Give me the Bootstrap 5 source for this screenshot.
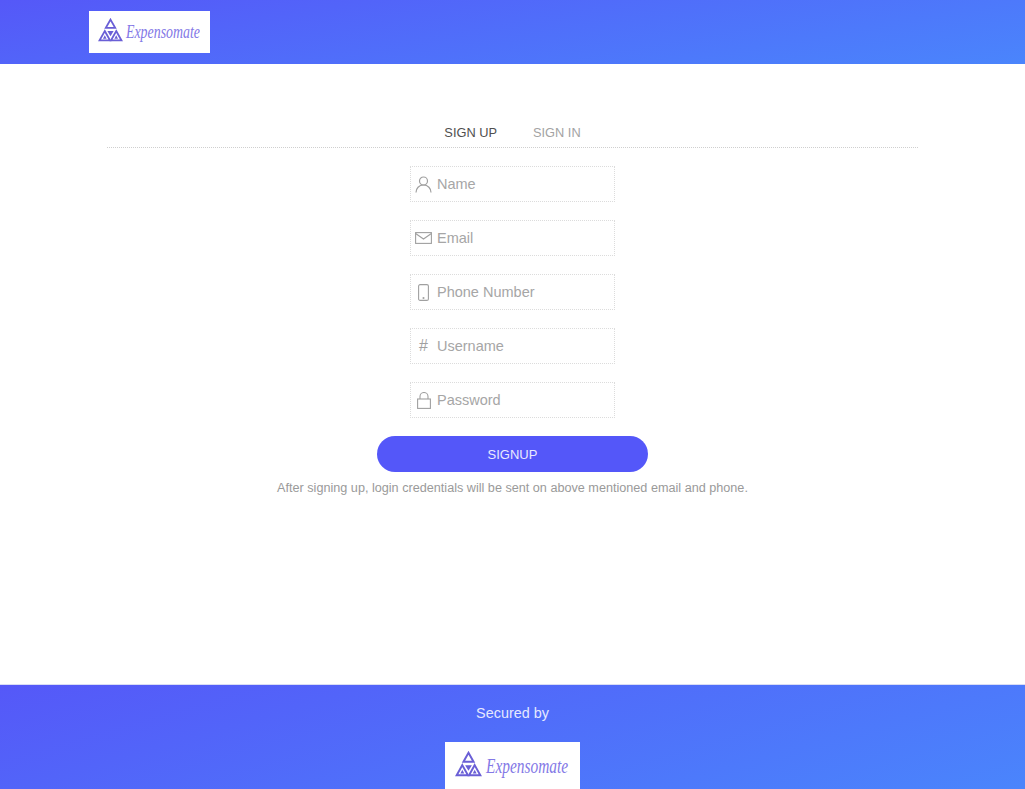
<!DOCTYPE html>
<html lang="en">
<head>
    <meta charset="UTF-8">
    <meta name="viewport" content="width=device-width, initial-scale=1.0">
    <title>Expensomate</title>
    <link href="https://cdn.jsdelivr.net/npm/bootstrap@5.3.0/dist/css/bootstrap.min.css" rel="stylesheet">
    <style>
        html, body { height: 789px; overflow: hidden; }
        body { font-family: "Liberation Sans", Arial, sans-serif; background: #fff; }
        .top-bar { height: 64px; padding: 11px 0 0 89px; background: linear-gradient(170deg, #5558f8 0%, #4a85fc 100%); }
        .logo-box { background: #fff; display: flex; align-items: center; }
        .logo-box svg { flex: none; }
        .logo-top { width: 121px; height: 42px; padding-left: 9px; gap: 3px; }
        .logo-top svg { margin-top: -5px; }
        .logo-bottom { width: 135px; height: 55px; padding: 0 0 8px 10px; gap: 4px; }
        .logo-bottom svg { margin-top: -3px; }
        .logo-word { font-family: "Liberation Serif", serif; font-style: italic; color: #8378e6; line-height: 1; transform: scaleX(.77); transform-origin: left center; white-space: nowrap; }
        .logo-top .logo-word { font-size: 18px; margin-top: -1px; }
        .logo-bottom .logo-word { font-size: 20px; }
        .signup-area { height: 620px; padding-top: 60px; }
        .tab-row { margin: 0 107px; height: 24px; border-bottom: 1px dotted #cfcfcf; gap: 36px; padding: 1px 0 0; }
        .tab-item { font-size: 12.800px; line-height: 16px; color: #a3a3a3; }
        .tab-item.current { color: #4f4f4f; }
        .form-wrap { padding-top: 18px; }
        .field-box { width: 205px; height: 36px; margin-bottom: 18px; border: 1px dotted #dcdcdc; }
        .field-icon { width: 26px; color: #a0a0a0; flex: none; padding-right: 1px; }
        .field-box input { border: 0; outline: 0; padding: 2px 0 0; width: 170px; font-size: 14.500px; background: transparent; color: #555; }
        .field-box input::placeholder { color: #a6a6a6; opacity: 1; }
        .hash-mark { font-size: 16px; line-height: 1; }
        .signup-btn { width: 271px; height: 36px; border-radius: 18px; background: #5457f9; border: 0; color: #e9e9ff; font-size: 13px; padding: 1px 0 0; }
        .signup-btn:hover { background: #5457f9; color: #e9e9ff; }
        .help-line { margin: 9px 0 0; font-size: 12.650px; line-height: 15px; color: #9a9a9a; }
        .foot-bar { height: 105px; overflow: hidden; border-top: 1px solid #d8dcf5; padding-top: 20px; background: linear-gradient(164deg, #5558f8 0%, #4a85fc 100%); }
        .secured-by { color: #e6e8ff; font-size: 14.400px; line-height: 17px; margin-bottom: 20px; }
    </style>
</head>
<body>
<svg width="0" height="0" class="d-block">
    <symbol id="tri-logo" viewBox="0 0 48 46">
        <g fill="none" stroke="#6a5fd6" stroke-width="3.500">
            <path d="M24 3 33 19H15Z"/>
            <path d="M13 25 23 43H3Z"/>
            <path d="M35 25 45 43H25Z"/>
        </g>
        <g fill="#6a5fd6">
            <path d="M13 33 16.500 40H9.500Z"/>
            <path d="M35 33 38.500 40H31.500Z"/>
            <path d="M18 25H30L24 35Z"/>
        </g>
    </symbol>
</svg>

<header class="top-bar">
    <div class="logo-box logo-top">
        <svg width="25" height="24"><use href="#tri-logo"/></svg>
        <span class="logo-word">Expensomate</span>
    </div>
</header>

<main class="signup-area">
    <div class="tab-row d-flex justify-content-center">
        <span class="tab-item current">SIGN UP</span>
        <span class="tab-item">SIGN IN</span>
    </div>

    <div class="form-wrap d-flex flex-column align-items-center">
        <div class="field-box d-flex align-items-center">
            <span class="field-icon d-flex justify-content-center">
                <svg width="17" height="17" viewBox="0 0 17 17" fill="none" stroke="currentColor" stroke-width="1.2"><circle cx="8.5" cy="5" r="4"/><path d="M1 16.500c0-4 3-7.500 7.500-7.500s7.500 3.500 7.500 7.500"/></svg>
            </span>
            <input type="text" placeholder="Name" aria-label="Name">
        </div>
        <div class="field-box d-flex align-items-center">
            <span class="field-icon d-flex justify-content-center">
                <svg width="17" height="12" viewBox="0 0 17 12" fill="none" stroke="currentColor" stroke-width="1.1"><rect x=".6" y=".6" width="15.800" height="10.800"/><path d="M.6 1.500 8.500 7l7.900-5.500"/></svg>
            </span>
            <input type="email" placeholder="Email" aria-label="Email">
        </div>
        <div class="field-box d-flex align-items-center">
            <span class="field-icon d-flex justify-content-center">
                <svg width="11" height="17" viewBox="0 0 11 17" fill="none" stroke="currentColor" stroke-width="1.100"><rect x=".6" y=".6" width="9.800" height="15.800" rx="1.500"/><circle cx="5.500" cy="14" r=".5"/></svg>
            </span>
            <input type="text" placeholder="Phone Number" aria-label="Phone Number">
        </div>
        <div class="field-box d-flex align-items-center">
            <span class="field-icon d-flex justify-content-center hash-mark">#</span>
            <input type="text" placeholder="Username" aria-label="Username">
        </div>
        <div class="field-box d-flex align-items-center">
            <span class="field-icon d-flex justify-content-center">
                <svg width="14" height="17" viewBox="0 0 14 17" fill="none" stroke="currentColor" stroke-width="1.100"><rect x=".6" y="7" width="12.800" height="9.400"/><path d="M3 7V4.500a4 4 0 0 1 8 0V7"/></svg>
            </span>
            <input type="password" placeholder="Password" aria-label="Password">
        </div>
        <button type="button" class="btn signup-btn">SIGNUP</button>
        <p class="help-line">After signing up, login credentials will be sent on above mentioned email and phone.</p>
    </div>
</main>

<footer class="foot-bar d-flex flex-column align-items-center">
    <div class="secured-by">Secured by</div>
    <div class="logo-box logo-bottom flex-shrink-0">
        <svg width="27" height="26"><use href="#tri-logo"/></svg>
        <span class="logo-word">Expensomate</span>
    </div>
</footer>

<script src="https://cdn.jsdelivr.net/npm/bootstrap@5.3.0/dist/js/bootstrap.bundle.min.js"></script>
</body>
</html>
